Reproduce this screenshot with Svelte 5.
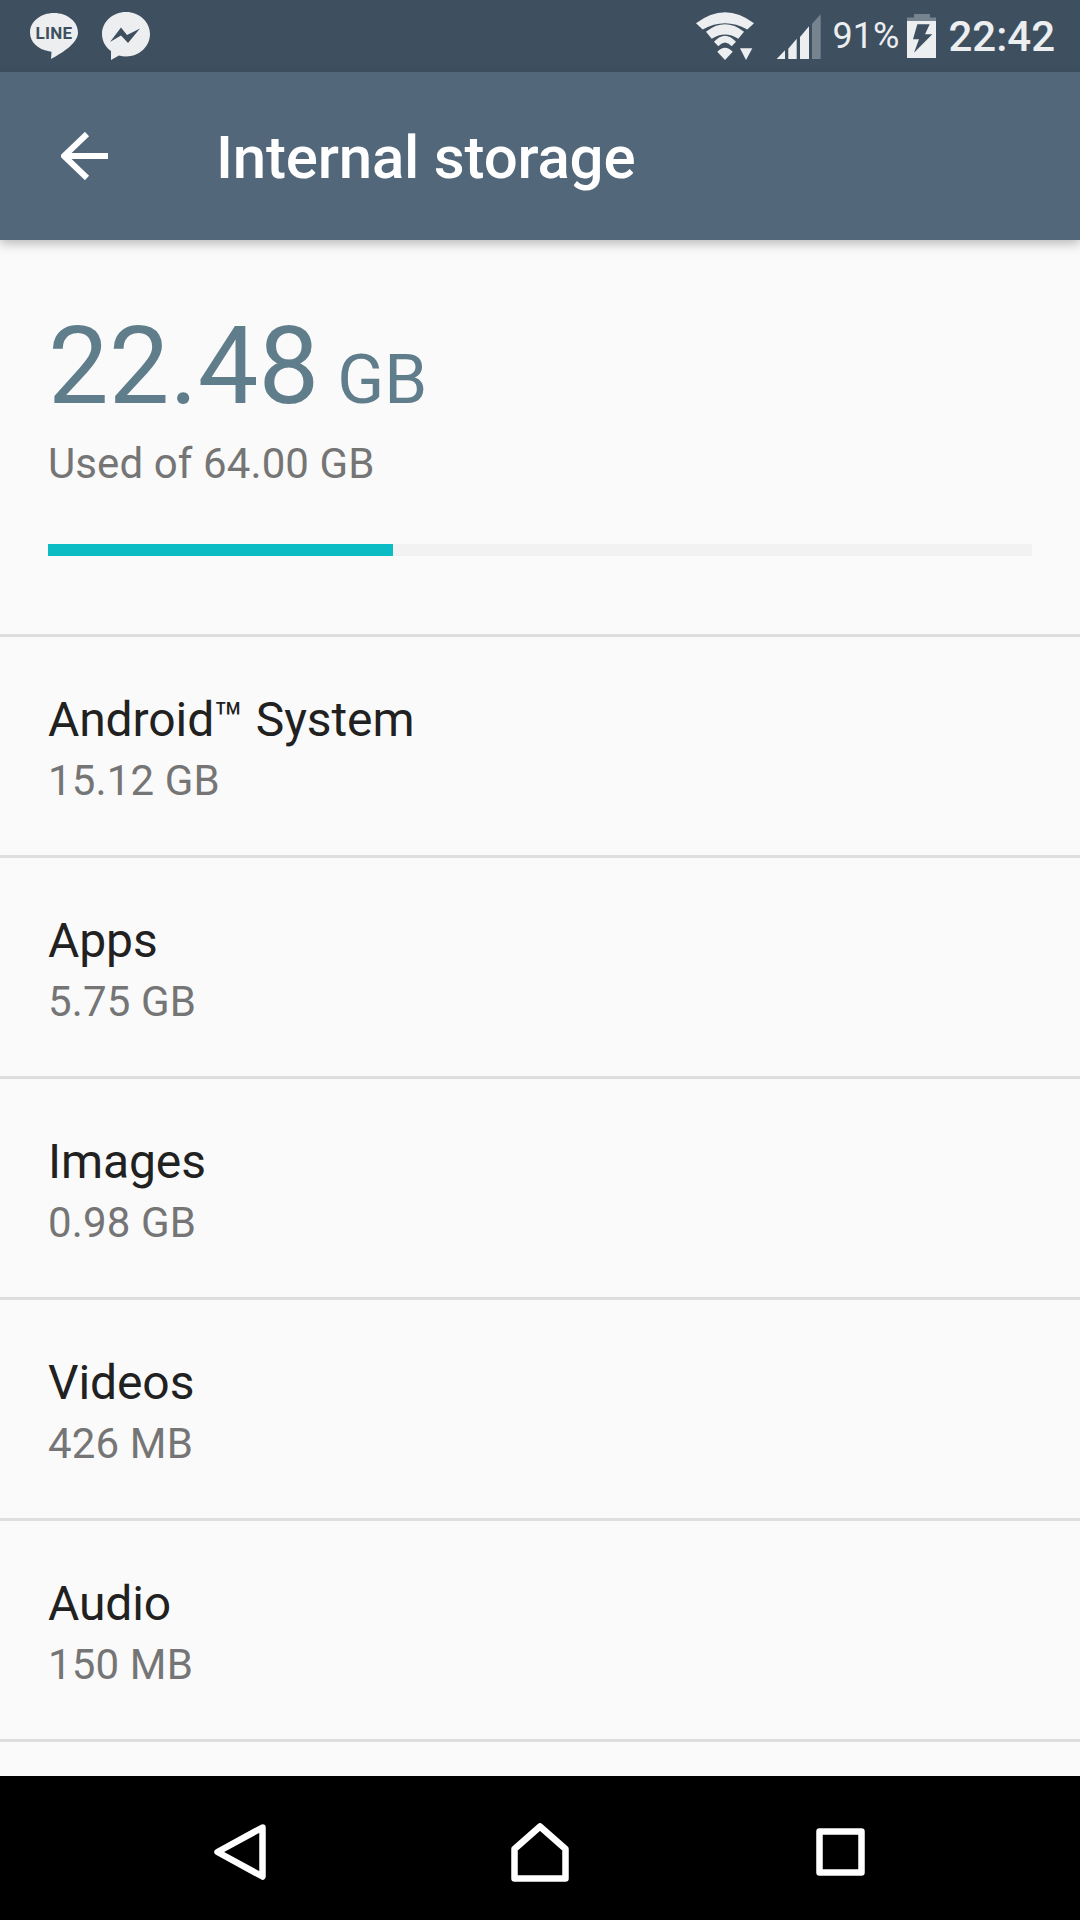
<script>
  const items = [
    { name: 'Android™ System', size: '15.12 GB' },
    { name: 'Apps', size: '5.75 GB' },
    { name: 'Images', size: '0.98 GB' },
    { name: 'Videos', size: '426 MB' },
    { name: 'Audio', size: '150 MB' }
  ]
  const usedPct = (345 / 984) * 100
</script>

<div class="screen">
  <div class="statusbar">
    <div class="notif">
      <svg class="line" viewBox="0 0 48 46" width="48" height="46">
        <path d="M24 0C10.700 0 0 8.500 0 19.500 0 29 8 36.500 19 38.300l2.500.400-.500 7.300C30 41 48 31 48 19.500 48 8.500 37.300 0 24 0Z" fill="#eceef0" />
        <text x="24" y="25.500" text-anchor="middle">LINE</text>
      </svg>
      <svg class="msgr" viewBox="0 0 48 48" width="48" height="48">
        <path d="M24 0C10.700 0 0 9.800 0 22c0 7 3.500 13 9 17l0 9 8-4.600c2.200.600 4.600 1 7 1 13.300 0 24-9.800 24-22.400C48 9.800 37.300 0 24 0Z" fill="#eceef0" />
        <path d="M8 30 19 15.500l6 7.500 13-6.500L26 31l-7-7.500Z" fill="#3e5060" />
      </svg>
    </div>
    <div class="sys">
      <svg class="wifi" viewBox="0 0 58 48" width="58" height="48">
        <path d="M0 11.300Q29-10.700 58 11.300L51.300 17.500Q29 5 6.700 17.500Z" fill="#eceef0" />
        <path d="M10 19.700Q29 4.900 48 19.700L42.300 26.800Q29 18 15.700 26.800Z" fill="#eceef0" />
        <path d="M18 29.700Q29 17.700 40 29.700L35.700 34.200Q29 27 22.300 34.200Z" fill="#eceef0" />
        <path d="M21.300 39.700Q29 31.700 36.700 39.700L29 48Z" fill="#eceef0" />
        <path d="M44 36.300H56.300L50 48Z" fill="#eceef0" />
      </svg>
      <svg class="signal" viewBox="0 0 45 45" width="45" height="45">
        <path d="M.7 45 9 36.300V45Z" fill="#eceef0" />
        <path d="M12.300 34.700 20.700 24.700V45H12.300Z" fill="#eceef0" />
        <path d="M24 23 33 12.300V45H24Z" fill="#eceef0" />
        <path d="M36 9.700 44.700.3V45H36Z" fill="#75848f" />
      </svg>
      <span class="pct">91%</span>
      <svg class="batt" viewBox="0 0 29 44" width="29" height="44">
        <path d="M7 0H23V3.500H29V8H0V3.500H7Z" fill="#75848f" />
        <path d="M0 7H29V44H0Z" fill="#eceef0" />
        <path d="M10.300 10.300H22.700L18 20.300H25.300L7 38.700 12 25.300H6Z" fill="#3e5060" />
      </svg>
      <span class="time">22:42</span>
    </div>
  </div>

  <header class="appbar">
    <svg class="back" viewBox="0 0 48 48" width="48" height="48">
      <path d="M47 24H4M26 2 3 24l23 22" fill="none" stroke="#fff" stroke-width="6" />
    </svg>
    <h1>Internal storage</h1>
  </header>

  <main class="content">
    <section class="summary">
      <div class="used"><span class="num">22.48</span><span class="unit">GB</span></div>
      <div class="of">Used of 64.00 GB</div>
      <div class="track"><div class="fill" style="width: {usedPct}%"></div></div>
    </section>

    {#each items as item}
      <div class="row">
        <div class="name">{item.name}</div>
        <div class="size">{item.size}</div>
      </div>
    {/each}
  </main>

  <nav class="navbar">
    <svg viewBox="0 0 52 56" width="52" height="56">
      <path d="M48.500 3.500 3.500 28l45 24.500Z" fill="none" stroke="#fff" stroke-width="6.500" stroke-linejoin="round" />
    </svg>
    <svg viewBox="0 0 58 59" width="58" height="59">
      <path d="M29 3.500 3.500 26v29.500h51V26Z" fill="none" stroke="#fff" stroke-width="6.500" stroke-linejoin="round" />
    </svg>
    <svg viewBox="0 0 49 48" width="49" height="48">
      <rect x="3.500" y="3.500" width="42" height="41" fill="none" stroke="#fff" stroke-width="6.500" stroke-linejoin="round" />
    </svg>
  </nav>
</div>

<style>
  :global(body) {
    margin: 0;
    background: #fafafa;
  }

  .screen {
    width: 1080px;
    height: 1920px;
    display: flex;
    flex-direction: column;
    overflow: hidden;
    font-family: Roboto, sans-serif;
    background: #fafafa;
  }

  .statusbar {
    height: 72px;
    flex: none;
    background: #3e5060;
    display: flex;
    align-items: center;
    justify-content: space-between;
    padding: 0 25px 0 30px;
    color: #eceef0;
  }

  .notif {
    display: flex;
    align-items: center;
    gap: 24px;
  }

  .line text {
    font-family: Roboto, sans-serif;
    font-weight: 700;
    font-size: 17px;
    letter-spacing: 0.3px;
    fill: #3e5060;
  }

  .sys {
    display: flex;
    align-items: center;
  }

  .wifi {
    margin-right: 22px;
  }

  .signal {
    margin-right: 12px;
  }

  .pct {
    font-size: 36px;
    margin-right: 8px;
  }

  .batt {
    margin-right: 12px;
  }

  .time {
    font-size: 42px;
    font-weight: 500;
  }

  .appbar {
    height: 168px;
    flex: none;
    background: #526779;
    display: flex;
    align-items: center;
    padding-left: 61px;
    box-shadow: 0 4px 10px rgba(0, 0, 0, 0.25);
    position: relative;
  }

  .appbar h1 {
    margin: 2px 0 0 107px;
    font-size: 60px;
    font-weight: 500;
    letter-spacing: -0.2px;
    color: #fff;
  }

  .content {
    flex: 1;
    min-height: 0;
  }

  .summary {
    height: 397px;
    box-sizing: border-box;
    padding: 71px 48px 0;
    border-bottom: 3px solid #dedede;
  }

  .used {
    color: #607d8b;
    line-height: 110px;
    height: 110px;
  }

  .num {
    font-size: 108px;
  }

  .unit {
    font-size: 69px;
    margin-left: 18px;
  }

  .of {
    color: #757575;
    font-size: 42px;
    line-height: 50px;
    letter-spacing: 0.1px;
    margin-top: 18px;
  }

  .track {
    height: 12px;
    margin-top: 55px;
    background: #f2f2f2;
  }

  .fill {
    height: 100%;
    background: #0bbcc4;
  }

  .row {
    height: 221px;
    box-sizing: border-box;
    padding: 53px 48px 0;
    border-bottom: 3px solid #dedede;
  }

  .name {
    font-size: 48px;
    line-height: 60px;
    letter-spacing: -0.1px;
    color: #212121;
  }

  .size {
    font-size: 42px;
    line-height: 50px;
    letter-spacing: 0.15px;
    color: #757575;
    margin-top: 6px;
  }

  .navbar {
    height: 144px;
    flex: none;
    background: #000;
    display: grid;
    grid-template-columns: repeat(3, 1fr);
    align-items: center;
    justify-items: center;
    padding: 8px 90px 0;
    box-sizing: border-box;
  }
</style>
